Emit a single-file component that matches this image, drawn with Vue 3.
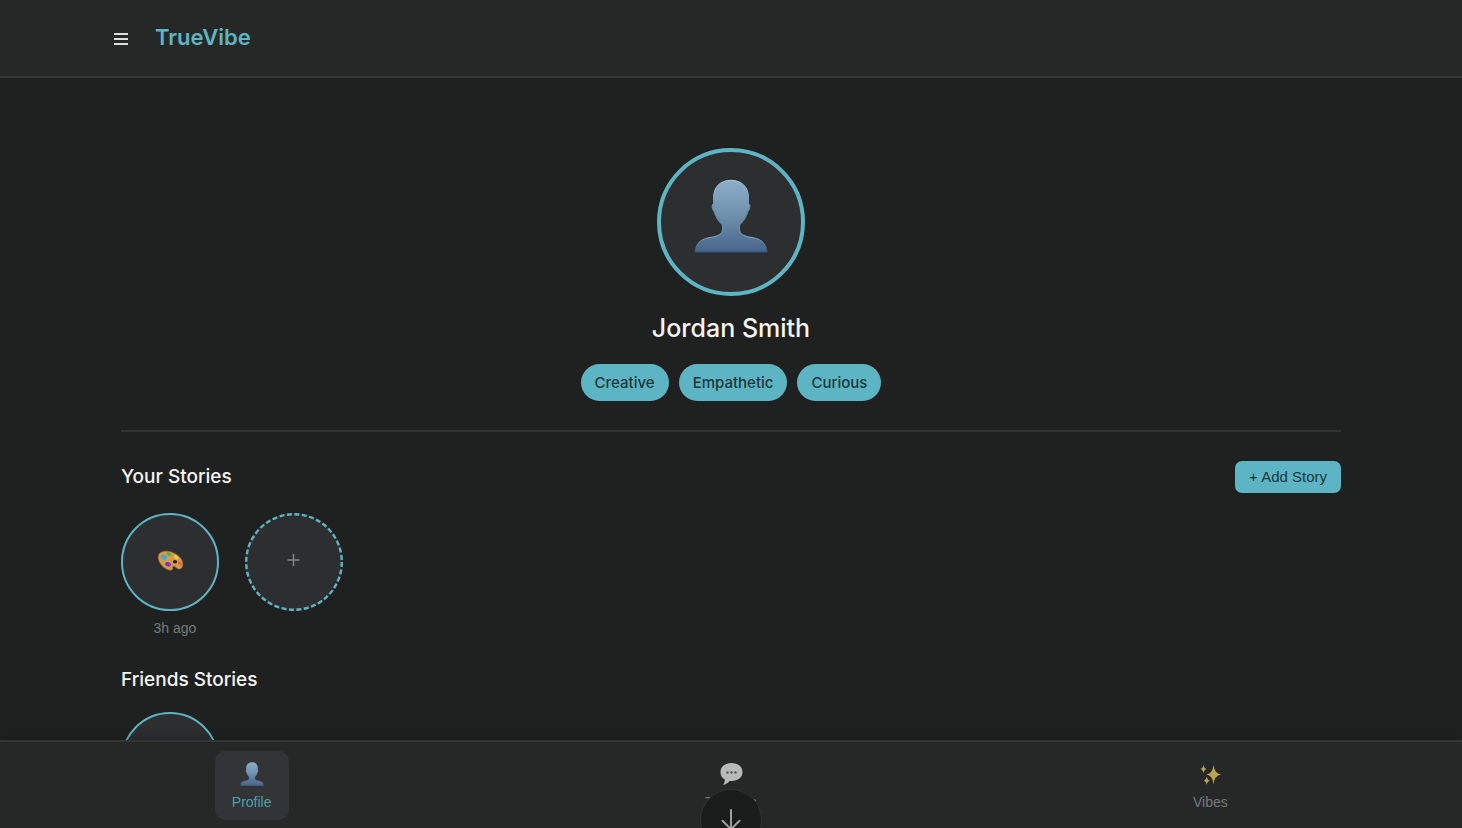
<script setup>
const tags = ['Creative', 'Empathetic', 'Curious']
</script>

<template>
  <div class="app">
    <header class="topbar">
      <button class="menu" type="button" aria-label="Menu">
        <svg width="14" height="12" viewBox="0 0 14 12"><path d="M0 1h14M0 6h14M0 11h14" stroke="#dedede" stroke-width="2" /></svg>
      </button>
      <h1 class="brand">TrueVibe</h1>
    </header>

    <main class="content">
      <section class="profile">
        <div class="avatar">
          <svg width="74" height="74" viewBox="0 0 74 74">
            <defs>
              <linearGradient id="bust" x1="0" y1="0" x2="0" y2="1">
                <stop offset="0" stop-color="#8dadcb" />
                <stop offset="0.45" stop-color="#7293b0" />
                <stop offset="1" stop-color="#48648b" />
              </linearGradient>
              <linearGradient id="rim" x1="0" y1="0" x2="0" y2="1">
                <stop offset="0" stop-color="#a5c9df" />
                <stop offset="0.5" stop-color="#55779e" />
                <stop offset="0.8" stop-color="#86afc9" />
                <stop offset="1" stop-color="#34517c" />
              </linearGradient>
            </defs>
            <path id="person" d="M37 1.300C26 1.300 19.500 8.500 19.500 18.500V24.500C17.500 25.500 17.800 30 20 32.500C21.500 38 24.500 42.500 28.500 46V50.500C28.500 55 24 57 18 58.200C8 59.500 2 63 1 73H73C72 63 66 59.500 56 58.200C50 57 45.500 55 45.500 50.500V46C49.500 42.500 52.500 38 54 32.500C56.200 30 56.500 25.500 54.500 24.500V18.500C54.500 8.500 48 1.300 37 1.300Z" fill="url(#bust)" stroke="url(#rim)" stroke-width="1" />
          </svg>
        </div>
        <h2 class="name">Jordan Smith</h2>
        <ul class="tags">
          <li v-for="tag in tags" :key="tag">{{ tag }}</li>
        </ul>
      </section>

      <section class="stories">
        <div class="heading">
          <h3>Your Stories</h3>
          <button class="add" type="button">+ Add Story</button>
        </div>
        <div class="row">
          <div class="story">
            <button class="ring" type="button" aria-label="View story">
              <svg width="28" height="22" viewBox="0 0 28 22">
                <path d="M2.300 7C2.300 3 6 .9 11 1.200C17 1.600 23 5 25.800 10C27.200 13 27.200 17 25 18.500C23 19.800 21 18.600 19.500 17C18 15.400 16 16.300 16.500 18C17.100 19.700 15.700 20.600 13.300 20C6.500 18.300 2.300 12 2.300 7Z" fill="#d49b48" stroke="#a56e2d" stroke-width=".7" />
                <ellipse cx="7.800" cy="7.300" rx="3.200" ry="2.300" transform="rotate(30 7.800 7.300)" fill="#47a9dc" />
                <ellipse cx="13" cy="4.200" rx="2.700" ry="1.900" transform="rotate(20 13 4.200)" fill="#58b638" />
                <ellipse cx="20.300" cy="7.300" rx="2.700" ry="1.600" transform="rotate(35 20.300 7.300)" fill="#f0cf45" />
                <ellipse cx="24" cy="13.500" rx="2.700" ry="1.700" transform="rotate(35 24 13.500)" fill="#e86357" />
                <ellipse cx="12" cy="14.300" rx="3" ry="2.200" transform="rotate(20 12 14.300)" fill="#7936c4" />
                <ellipse cx="19" cy="11.800" rx="2.200" ry="1.800" fill="#28231f" />
              </svg>
            </button>
            <span>3h ago</span>
          </div>
          <div class="story">
            <button class="ring dashed" type="button" aria-label="New story">
              <svg width="98" height="98" viewBox="0 0 98 98" fill="none">
                <circle cx="49" cy="49" r="47.800" stroke="#5db5c4" stroke-width="2.400" stroke-dasharray="5 2.508" />
                <path d="M42.500 47h12M48.500 41v12" stroke="#858687" stroke-width="1.500" />
              </svg>
            </button>
          </div>
        </div>
      </section>

      <section class="friends">
        <h3>Friends Stories</h3>
        <div class="row">
          <button class="ring" type="button" aria-label="View friend story"></button>
        </div>
      </section>
    </main>

    <nav class="tabs">
      <button class="tab active" type="button">
        <svg width="24" height="24" viewBox="0 0 74 74"><use href="#person" /></svg>
        <span>Profile</span>
      </button>
      <button class="tab" type="button">
        <svg width="24" height="24" viewBox="0 0 24 24">
          <path d="M12.500 1C19 1 23.500 4.500 23.500 10C23.500 15.500 19 19 12.500 19H10.500C9 21 6.500 22.500 4 23C5.300 21.500 5.900 19.500 5.800 17.500C3 16 1.500 13.400 1.500 10C1.500 4.500 6 1 12.500 1Z" fill="#b9b9b9" />
          <g fill="#555656"><circle cx="8.500" cy="10.500" r="1.200" /><circle cx="12.500" cy="10.500" r="1.200" /><circle cx="16.500" cy="10.500" r="1.200" /></g>
        </svg>
        <span>Threads</span>
      </button>
      <button class="tab" type="button">
        <svg width="24" height="24" viewBox="0 0 24 24" fill="#bda34e">
          <path d="M15.500 3Q16.500 11.500 23 12.500Q16.500 13.500 15.500 22.500Q14.500 13.500 8.500 12.500Q14.500 11.500 15.500 3Z" />
          <path d="M5.500 2.500Q6 6.500 8.700 7Q6 7.500 5.500 11.500Q5 7.500 2.300 7Q5 6.500 5.500 2.500Z" />
          <path d="M8.700 14.500Q9.200 18 12 18.700Q9.200 19.300 8.700 23Q8.200 19.300 5.600 18.700Q8.200 18 8.700 14.500Z" />
        </svg>
        <span>Vibes</span>
      </button>
      <button class="down" type="button" aria-label="Scroll down">
        <svg width="20" height="24" viewBox="0 0 20 24" fill="none" stroke="#9c9d9d" stroke-width="2" stroke-linecap="round" stroke-linejoin="round"><path d="M10 2v19M1.500 12.800L10 21.300l8.500-8.500" /></svg>
      </button>
    </nav>
  </div>
</template>

<style>
body { background: #1f2121; }
</style>

<style scoped>
* { box-sizing: border-box; margin: 0; }
button { border: 0; padding: 0; cursor: pointer; font-family: "Liberation Sans", Arial, sans-serif; }
.app { height: 100vh; display: flex; flex-direction: column; overflow: hidden; background: #1f2121; color: #f5f5f5; font-family: Inter, sans-serif; }
.topbar { flex: none; height: 78px; display: flex; align-items: center; gap: 27px; padding: 0 114px; background: #262828; border-bottom: 2px solid #343636; }
.menu { display: flex; background: none; padding-top: 2px; }
.brand { color: #5db5c4; font-size: 22px; line-height: 28px; font-weight: 600; padding-bottom: 2px; }
.content { flex: 1; min-height: 0; overflow: hidden; padding: 70px 121px 0; }
.profile { display: flex; flex-direction: column; align-items: center; padding-bottom: 29px; border-bottom: 2px solid #313333; }
.avatar { width: 148px; height: 148px; display: flex; align-items: center; justify-content: center; padding-bottom: 12px; border: 4px solid #5db5c4; border-radius: 50%; background: #2d2e30; }
.name { margin: 16px 0 20px; font-size: 25px; line-height: 32px; font-weight: 500; }
.tags { display: flex; gap: 10px; padding: 0; list-style: none; }
.tags li { padding: 0 14px; border-radius: 20px; background: #5db5c4; color: #17373c; font-size: 15px; line-height: 37px; font-weight: 500; }
.heading { display: flex; align-items: center; justify-content: space-between; margin: 29px 0 20px; }
h3 { font-size: 19px; line-height: 30px; font-weight: 500; }
.add { padding: 0 14px; border-radius: 7px; background: #5db5c4; color: #17373c; font-size: 15px; line-height: 32px; }
.row { display: flex; gap: 16px; }
.story { width: 108px; display: flex; flex-direction: column; }
.story span { margin-top: 7px; color: #777979; font-family: "Liberation Sans", Arial, sans-serif; font-size: 14px; line-height: 20px; text-align: center; }
.ring { flex: none; width: 98px; height: 98px; display: flex; align-items: center; justify-content: center; border: 2px solid #5db5c4; border-radius: 50%; background: #2d2e30; padding-bottom: 3px; }
.dashed { border: 0; padding: 0; }
.friends h3 { margin: 27px 0 17px; }
.tabs { position: relative; flex: none; height: 88px; display: grid; grid-template-columns: repeat(3, 1fr); justify-items: center; align-items: start; padding: 9px 12px 0; background: #262828; border-top: 2px solid #343636; box-shadow: 0 -2px 10px rgba(0, 0, 0, 0.2); }
.tab { min-width: 74px; height: 69px; display: flex; flex-direction: column; align-items: center; padding-top: 11px; border-radius: 10px; background: none; color: #777979; font-size: 14px; line-height: 20px; }
.tab span { margin-top: 6px; }
.active { background: #323435; color: #4fa0ad; }
.down { position: absolute; left: 50%; top: 47px; width: 62px; height: 62px; margin-left: -31px; padding-top: 18px; border: 1px solid #303232; border-radius: 50%; background: #1a1c1c; display: flex; justify-content: center; align-items: flex-start; }
</style>
